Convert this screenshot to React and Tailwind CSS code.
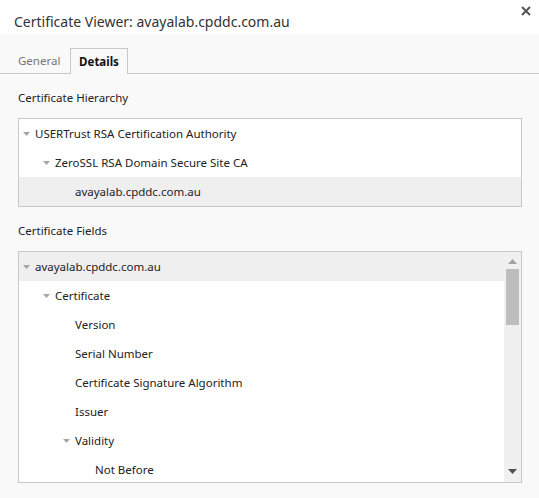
import React from 'react'

const FONT = { fontFamily: '"Noto Sans", "Open Sans", sans-serif' }

const HIERARCHY = [
  { label: 'USERTrust RSA Certification Authority', level: 0, open: true },
  { label: 'ZeroSSL RSA Domain Secure Site CA', level: 1, open: true },
  { label: 'avayalab.cpddc.com.au', level: 2, selected: true },
]

const FIELDS = [
  { label: 'avayalab.cpddc.com.au', level: 0, open: true, selected: true },
  { label: 'Certificate', level: 1, open: true },
  { label: 'Version', level: 2 },
  { label: 'Serial Number', level: 2 },
  { label: 'Certificate Signature Algorithm', level: 2 },
  { label: 'Issuer', level: 2 },
  { label: 'Validity', level: 2, open: true },
  { label: 'Not Before', level: 3 },
]

const PAD = ['pl-[4px]', 'pl-[24px]', 'pl-[44px]', 'pl-[64px]']

function Caret() {
  return (
    <svg width="7" height="4" viewBox="0 0 7 4" className="block">
      <path d="M0 0h7L3.5 4z" fill="#a6a6a6" />
    </svg>
  )
}

function Row({ label, level, open, selected }) {
  return (
    <div className={`h-[29px] flex items-center ${PAD[level]} ${selected ? 'bg-[#efefef]' : ''}`}>
      <span className="w-[12px] flex items-center">{open && <Caret />}</span>
      <span className="text-[11.5px] text-[#222] whitespace-nowrap">{label}</span>
    </div>
  )
}

export default function App() {
  return (
    <div className="w-[539px] h-[498px] bg-[#f9f9f9] overflow-hidden" style={FONT}>
      <div className="h-[34px] bg-white flex justify-between items-start">
        <div className="pl-[14px] pt-[11px] text-[14px] leading-[22px] text-[#333]">
          Certificate Viewer: avayalab.cpddc.com.au
        </div>
        <svg width="10" height="10" viewBox="0 0 10 10" className="mt-[6px] mr-[8px]">
          <path d="M1 1l8 8M9 1l-8 8" stroke="#555" strokeWidth="2" />
        </svg>
      </div>

      <div className="pt-[14px] border-b border-[#c8c8c8] flex items-end pl-[10px]">
        <div className="w-[60px] h-[25px] flex items-center pl-[8px] text-[11.5px] text-[#777]">General</div>
        <div className="w-[58px] h-[26px] -mb-px border border-b-0 border-[#c8c8c8] bg-[#f9f9f9] flex items-center justify-center text-[11.5px] font-bold text-[#111]">
          Details
        </div>
      </div>

      <div className="pl-[18px] pr-[17px]">
        <div className="pt-[16px] pb-[12px] leading-[16px] text-[11.5px] text-[#222]">Certificate Hierarchy</div>
        <div className="border border-[#c8c8c8] bg-white">
          {HIERARCHY.map((r) => <Row key={r.label} {...r} />)}
        </div>

        <div className="pt-[16px] pb-[12px] leading-[16px] text-[11.5px] text-[#222]">Certificate Fields</div>
        <div className="border border-[#c8c8c8] bg-white h-[232px] flex overflow-hidden">
          <div className="flex-1">
            {FIELDS.map((r) => <Row key={r.label} {...r} />)}
          </div>
          <div className="w-[17px] bg-[#f0f0f0] flex flex-col items-center">
            <svg width="9" height="5" viewBox="0 0 9 5" className="mt-[7px]">
              <path d="M0 5h9L4.5 0z" fill="#a3a3a3" />
            </svg>
            <div className="mt-[5px] w-[13px] h-[56px] bg-[#bdbdbd]" />
            <div className="flex-1" />
            <svg width="9" height="5" viewBox="0 0 9 5" className="mb-[8px]">
              <path d="M0 0h9L4.5 5z" fill="#505050" />
            </svg>
          </div>
        </div>
      </div>
    </div>
  )
}
